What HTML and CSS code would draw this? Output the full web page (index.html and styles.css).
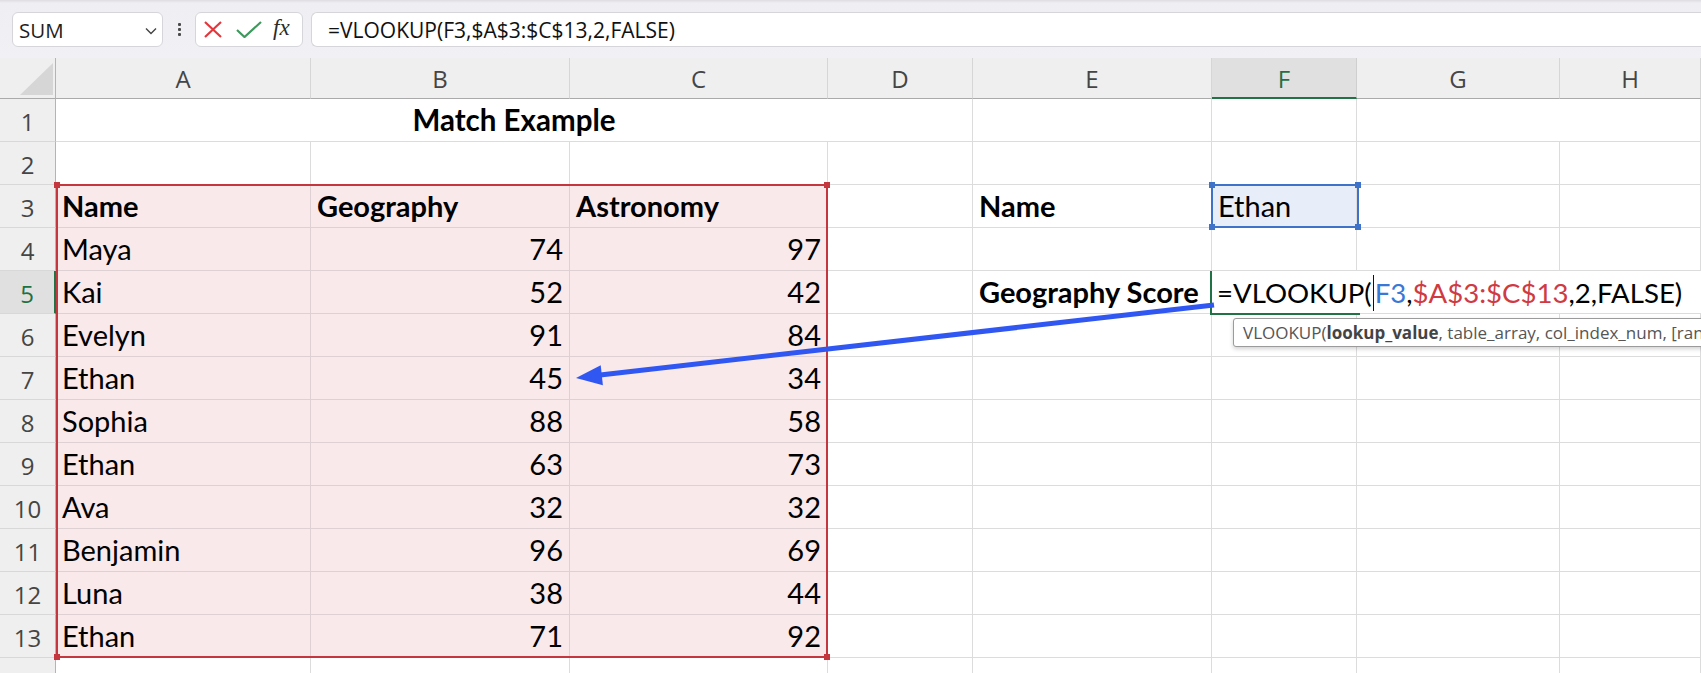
FILE: index.html
```html
<!DOCTYPE html>
<html lang="en">
<head>
<meta charset="utf-8">
<title>VLOOKUP Example</title>
<link rel="stylesheet" href="styles.css">
</head>
<body>
<div class="fbar">
  <div class="namebox"><span>SUM</span>
    <svg class="chev" width="12" height="8" viewBox="0 0 12 8"><path d="M1 1.5 L6 6.5 L11 1.5" fill="none" stroke="#444" stroke-width="1.4"/></svg>
  </div>
  <div class="dots"><i></i><i></i><i></i></div>
  <div class="btns">
    <svg class="ix" width="18" height="17" viewBox="0 0 18 17"><path d="M1 1 L17 16 M17 1 L1 16" stroke="#e2373c" stroke-width="2.2" fill="none"/></svg>
    <svg class="ick" width="26" height="17" viewBox="0 0 26 17"><path d="M1 9 L8.5 16 L25 1" stroke="#3b9a5c" stroke-width="2.2" fill="none"/></svg>
    <span class="fx">fx</span>
  </div>
  <div class="finput">=VLOOKUP(F3,$A$3:$C$13,2,FALSE)</div>
</div>

<div class="sheet">
  <div class="corner"><svg width="56" height="41" viewBox="0 0 56 41"><polygon points="20,37 53,37 53,5" fill="#d6d6d6"/></svg></div>
  <div class="h">A</div><div class="h">B</div><div class="h">C</div><div class="h">D</div><div class="h">E</div><div class="h hs">F</div><div class="h">G</div><div class="h">H</div>

  <div class="rh">1</div><div class="c b title span4">Match Example</div><div class="c"></div><div class="c"></div><div class="c span2"></div>

  <div class="rh">2</div><div class="c"></div><div class="c"></div><div class="c"></div><div class="c"></div><div class="c"></div><div class="c"></div><div class="c"></div><div class="c"></div>

  <div class="rh">3</div><div class="c p b">Name</div><div class="c p b">Geography</div><div class="c p b">Astronomy</div><div class="c"></div><div class="c b">Name</div><div class="c fsel-cell">Ethan</div><div class="c"></div><div class="c"></div>

  <div class="rh">4</div><div class="c p">Maya</div><div class="c p n">74</div><div class="c p n">97</div><div class="c"></div><div class="c"></div><div class="c"></div><div class="c"></div><div class="c"></div>

  <div class="rh rhs">5</div><div class="c p">Kai</div><div class="c p n">52</div><div class="c p n">42</div><div class="c"></div><div class="c b">Geography Score</div>
  <div class="c edit span3"><span class="ft">=VLOOKUP(<i class="caret"></i><span class="ref1">F3</span>,<span class="ref2">$A$3:$C$13</span>,2,FALSE)</span></div>

  <div class="rh">6</div><div class="c p">Evelyn</div><div class="c p n">91</div><div class="c p n">84</div><div class="c"></div><div class="c"></div><div class="c"></div><div class="c"></div><div class="c"></div>

  <div class="rh">7</div><div class="c p">Ethan</div><div class="c p n">45</div><div class="c p n">34</div><div class="c"></div><div class="c"></div><div class="c"></div><div class="c"></div><div class="c"></div>

  <div class="rh">8</div><div class="c p">Sophia</div><div class="c p n">88</div><div class="c p n">58</div><div class="c"></div><div class="c"></div><div class="c"></div><div class="c"></div><div class="c"></div>

  <div class="rh">9</div><div class="c p">Ethan</div><div class="c p n">63</div><div class="c p n">73</div><div class="c"></div><div class="c"></div><div class="c"></div><div class="c"></div><div class="c"></div>

  <div class="rh">10</div><div class="c p">Ava</div><div class="c p n">32</div><div class="c p n">32</div><div class="c"></div><div class="c"></div><div class="c"></div><div class="c"></div><div class="c"></div>

  <div class="rh">11</div><div class="c p">Benjamin</div><div class="c p n">96</div><div class="c p n">69</div><div class="c"></div><div class="c"></div><div class="c"></div><div class="c"></div><div class="c"></div>

  <div class="rh">12</div><div class="c p">Luna</div><div class="c p n">38</div><div class="c p n">44</div><div class="c"></div><div class="c"></div><div class="c"></div><div class="c"></div><div class="c"></div>

  <div class="rh">13</div><div class="c p">Ethan</div><div class="c p n">71</div><div class="c p n">92</div><div class="c"></div><div class="c"></div><div class="c"></div><div class="c"></div><div class="c"></div>

  <div class="rh">14</div><div class="c"></div><div class="c"></div><div class="c"></div><div class="c"></div><div class="c"></div><div class="c"></div><div class="c"></div><div class="c"></div>

  <div class="range"><i class="hd tl"></i><i class="hd tr"></i><i class="hd bl"></i><i class="hd br"></i></div>
  <div class="fsel"><i class="hd tl"></i><i class="hd tr"></i><i class="hd bl"></i><i class="hd br"></i></div>
  <div class="tip">VLOOKUP(<b>lookup_value</b>, table_array, col_index_num, [range_lookup])</div>
  <svg class="arrow" width="1701" height="615" viewBox="0 0 1701 615">
    <line x1="1214" y1="247" x2="598" y2="317.3" stroke="#3157f2" stroke-width="5"/>
    <polygon points="576,320 602.9,327.2 600.7,307.2" fill="#3157f2"/>
  </svg>
</div>
</body>
</html>
```

FILE: styles.css
```css
* { box-sizing: border-box; margin: 0; padding: 0; }
html, body { width: 1701px; height: 673px; overflow: hidden; background: #ffffff; }
body { font-family: "Lato", sans-serif; color: #000; }

/* ---------- formula bar ---------- */
.fbar {
  height: 58px;
  display: flex;
  align-items: flex-start;
  padding: 12px 0 0 12px;
  background: linear-gradient(#dedce2 0, #efeef2 3px, #f1f0f4 100%);
  font-family: "Open Sans", sans-serif;
}
.namebox {
  width: 151px; height: 35px;
  background: #fff;
  border: 1px solid #d6d5da;
  border-radius: 6px;
  display: flex; align-items: center; justify-content: space-between;
  padding: 0 5px 0 6px;
  font-size: 20.5px; color: #1e1e1e;
}
.chev { margin-top: 2px; }
.dots {
  width: 32px; height: 35px;
  display: flex; flex-direction: column; align-items: center; justify-content: center; gap: 2px;
}
.dots i { display: block; width: 3px; height: 3px; background: #4a4a4a; border-radius: 1px; }
.btns {
  width: 108px; height: 35px;
  background: #fff;
  border: 1px solid #d6d5da;
  border-radius: 6px;
  display: flex; align-items: center;
  padding-left: 8px;
}
.ix { margin-right: 14px; }
.ick { margin-right: 11px; margin-top: -1px; }
.fx {
  font-family: "Liberation Serif", serif;
  font-style: italic;
  font-size: 23px;
  color: #2b2b2b;
  margin-top: -4px;
}
.finput {
  flex: 1;
  margin-left: 8px;
  height: 35px;
  background: #fff;
  border: 1px solid #d6d5da;
  border-right: none;
  border-radius: 6px 0 0 6px;
  padding-left: 16px;
  display: flex; align-items: center;
  font-size: 21px; color: #111;
}

/* ---------- sheet ---------- */
.sheet {
  position: relative;
  display: grid;
  grid-template-columns: 56px 255px 259px 258px 145px 239px 145px 203px 141px;
  grid-template-rows: 41px repeat(14, 43px);
  height: 615px;
  overflow: hidden;
}
.corner {
  background: #efefef;
  border-right: 1px solid #b4b4b4;
  border-bottom: 1px solid #aaaaaa;
}
.corner svg { display: block; }
.h {
  background: #efefef;
  border-right: 1px solid #d6d6d6;
  border-bottom: 1px solid #aaaaaa;
  display: flex; align-items: center; justify-content: center;
  font-family: "Open Sans", sans-serif;
  font-size: 24px; color: #454545;
  padding-top: 1px;
}
.h.hs {
  background: #e0e0e0;
  color: #1e7145;
  border-bottom: 2px solid #217346;
  border-right-color: #cfcfcf;
}
.rh {
  background: #efefef;
  border-right: 1px solid #b4b4b4;
  border-bottom: 1px solid #d8d8d8;
  display: flex; align-items: center; justify-content: center;
  font-family: "Open Sans", sans-serif;
  font-size: 24px; color: #454545;
  padding-top: 2px;
}
.rh.rhs {
  background: #e0e0e0;
  color: #1e7145;
  border-right: 2px solid #217346;
}
.c {
  border-right: 1px solid #dcdcdc;
  border-bottom: 1px solid #dcdcdc;
  font-size: 29px;
  line-height: 42px;
  padding: 0 6px;
  white-space: nowrap;
  background: #fff;
}
.c.p { background: #f9e9eb; border-color: #ddd1d3; }
.c.n { text-align: right; }
.c.b { font-weight: 700; }
.title { font-size: 29.5px; }
.span4 { grid-column: span 4; }
.span3 { grid-column: span 3; }
.span2 { grid-column: span 2; }
.title { text-align: center; padding-left: 0; padding-right: 0; }
.fsel-cell { background: #e8eef9; }

.edit {
  position: relative;
  overflow: visible;
  padding-left: 5px;
  border-right: none;
}
.edit::before {
  content: "";
  position: absolute;
  left: -2px; top: 0;
  width: 2px; height: 44px;
  background: #217346;
}
.edit::after {
  content: "";
  position: absolute;
  left: -2px; top: 42px;
  width: 150px; height: 2px;
  background: #217346;
}
.ft { font-size: 27.6px; }
.ref1 { color: #3a78d8; }
.ref2 { color: #cf3a43; }
.caret {
  display: inline-block;
  width: 1px; height: 36px;
  background: #111;
  vertical-align: -8px;
  margin: 0 1px 0 1px;
}

/* ---------- overlays ---------- */
.range {
  position: absolute;
  left: 56px; top: 126px;
  width: 772px; height: 474px;
  border: 2px solid #c4373f;
  pointer-events: none;
}
.range .hd { background: #c4373f; }
.fsel {
  position: absolute;
  left: 1211px; top: 126px;
  width: 148px; height: 44px;
  border: 2px solid #3f72c9;
  pointer-events: none;
}
.fsel .hd { background: #3f72c9; }
.hd { position: absolute; width: 6px; height: 6px; display: block; }
.hd.tl { left: -4px; top: -4px; }
.hd.tr { right: -4px; top: -4px; }
.hd.bl { left: -4px; bottom: -4px; }
.hd.br { right: -4px; bottom: -4px; }

.tip {
  position: absolute;
  left: 1233px; top: 260px;
  height: 29px; width: 560px;
  background: #fff;
  border: 1px solid #9b9b9b;
  border-radius: 3px;
  box-shadow: 0 2px 4px rgba(0,0,0,0.18);
  padding-left: 9px;
  font-family: "Open Sans", sans-serif;
  font-size: 17px;
  line-height: 27px;
  color: #555;
  white-space: nowrap;
}
.tip b { font-weight: 700; color: #444; }

.arrow {
  position: absolute;
  left: 0; top: 0;
  pointer-events: none;
}
```
